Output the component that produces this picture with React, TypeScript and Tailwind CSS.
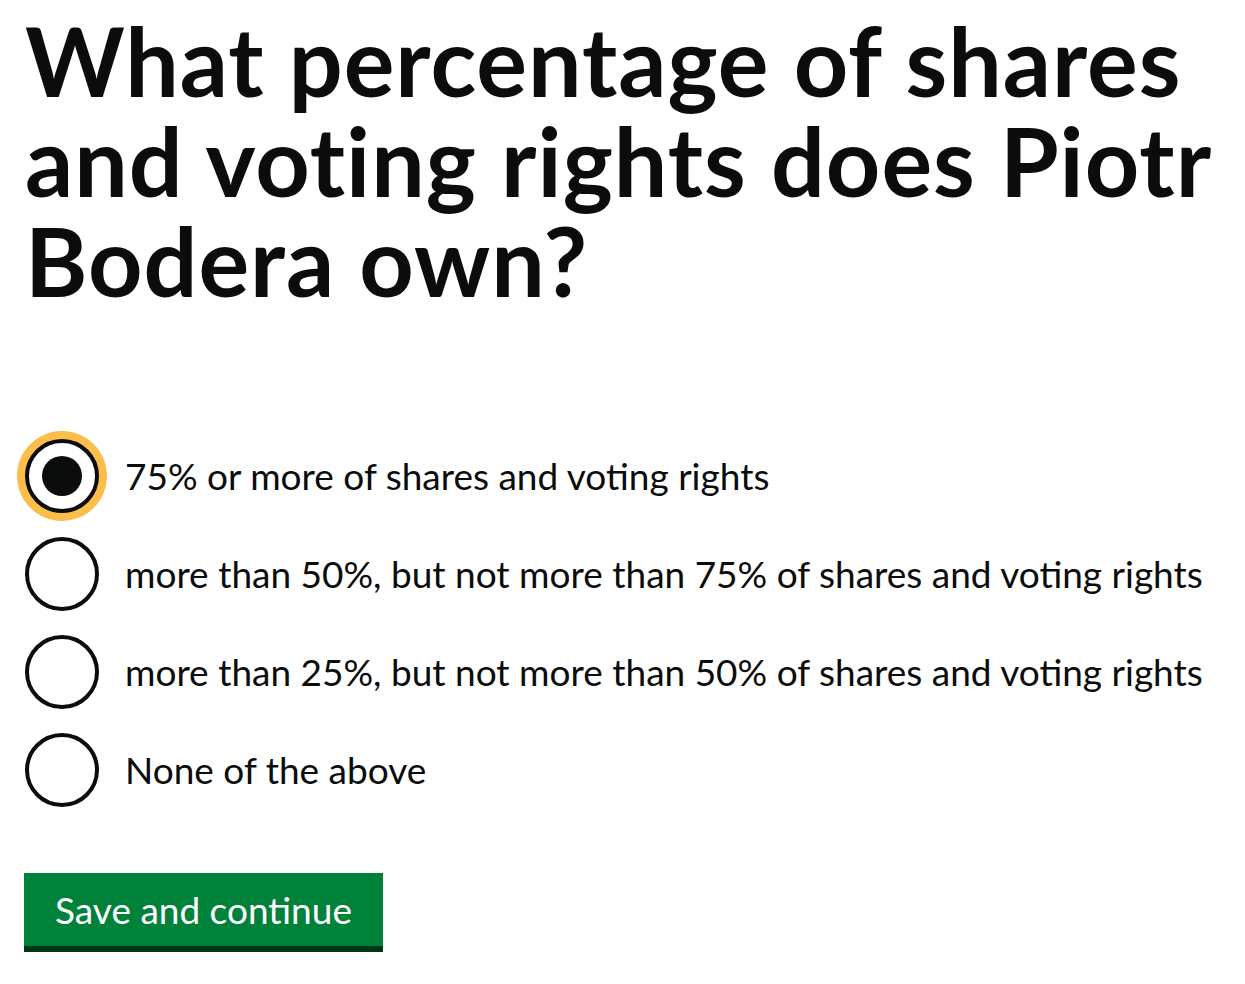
const options = [
  "75% or more of shares and voting rights",
  "more than 50%, but not more than 75% of shares and voting rights",
  "more than 25%, but not more than 50% of shares and voting rights",
  "None of the above",
];

function Radio({ label, checked }: { label: string; checked?: boolean }) {
  return (
    <label className="flex items-center h-[74px]">
      <span
        className={
          "relative flex shrink-0 items-center justify-center w-[74px] h-[74px] rounded-full border-[4px] border-[#0b0c0c] bg-white" +
          (checked ? " shadow-[0_0_0_8px_#fdbd4a]" : "")
        }
      >
        {checked && <span className="w-[40px] h-[40px] rounded-full bg-[#0b0c0c]" />}
      </span>
      <span className="ml-[26px] text-[37px] leading-[40px] text-[#0b0c0c]">{label}</span>
    </label>
  );
}

export default function App() {
  return (
    <div className="min-h-screen bg-white pl-[25px] pt-[10px] font-['Lato','Liberation_Sans',sans-serif] text-[#0b0c0c]">
      <h1 className="text-[95px] leading-[100px] font-bold tracking-[1px]">
        What percentage of shares
        <br />
        and voting rights does Piotr
        <br />
        Bodera own?
      </h1>

      <div className="mt-[129px] flex flex-col gap-[24px]">
        {options.map((o, i) => (
          <Radio key={o} label={o} checked={i === 0} />
        ))}
      </div>

      <button className="mt-[66px] -ml-px bg-[#00823b] text-white text-[37px] leading-[40px] px-[31px] pt-[17px] pb-[16px] shadow-[0_6px_0_#003618]">
        Save and continue
      </button>
    </div>
  );
}
